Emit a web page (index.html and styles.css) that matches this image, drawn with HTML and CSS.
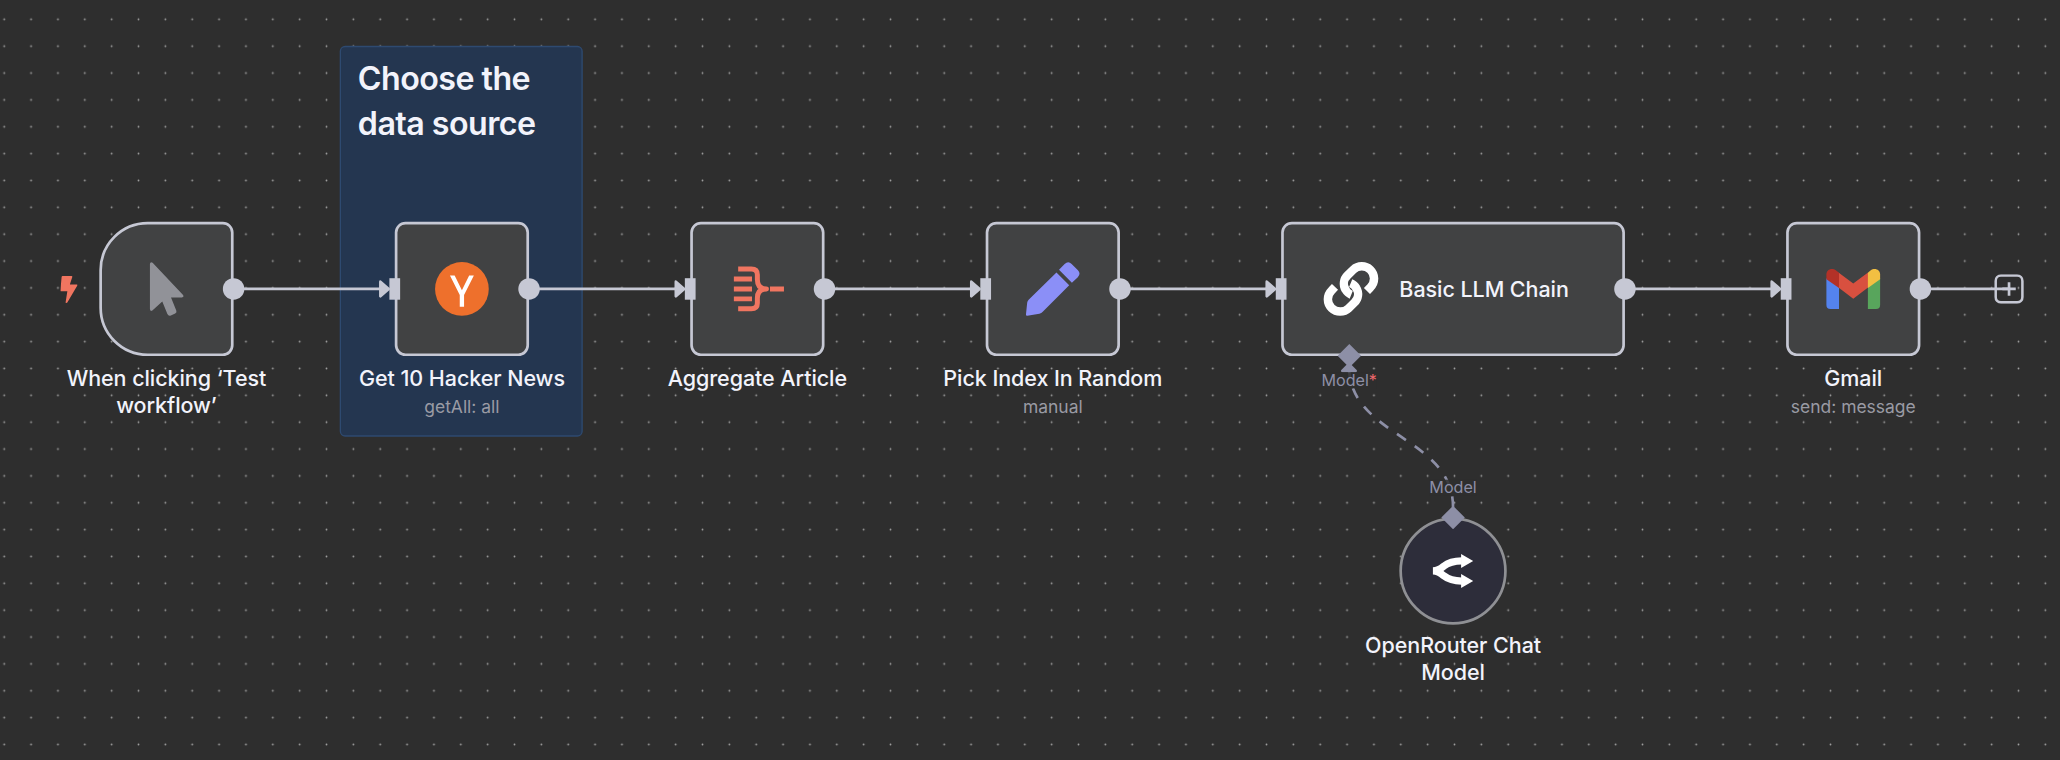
FILE: index.html
```html
<!DOCTYPE html>
<html lang="en">
<head>
<meta charset="utf-8">
<title>Workflow</title>
<link rel="stylesheet" href="styles.css">
</head>
<body>
<main class="canvas">
  <svg class="grid" width="2060" height="760">
    <defs>
      <pattern id="dots" x="-9.2" y="5.9" width="26.857" height="26.857" patternUnits="userSpaceOnUse">
        <circle cx="13.43" cy="13.43" r="0.9" fill="#a0a0a0"/>
      </pattern>
    </defs>
    <rect width="2060" height="760" fill="url(#dots)"/>
  </svg>

  <div class="viewport">
    <section class="sticky"><h2>Choose the data source</h2></section>

    <svg class="edges" width="1500" height="400">
      <defs>
        <path id="head" d="M-10.7 -5.4 L-4.5 0 L-10.7 5.4 Z"/>
      </defs>
      <g class="main">
        <path d="M100 50H210M320 50H430M540 50H650M760 50H870M1136 50H1246M1356 50H1422"/>
        <use href="#head" x="220" y="50"/>
        <use href="#head" x="440" y="50"/>
        <use href="#head" x="660" y="50"/>
        <use href="#head" x="880" y="50"/>
        <use href="#head" x="1256" y="50"/>
      </g>
      <path class="dashed" d="M1008 212.5 C1008 160 930.5 160 930.5 107.500"/>
      <path class="model-head" d="M930.5 106 L935.5 111 H925.5 Z"/>
    </svg>

    <article class="node trigger n1">
      <svg class="bolt" viewBox="0 0 18 28"><path d="M2.3 0H11.5Q12.6 0 12.3 1L9.8 8.6H17Q18 8.6 17.5 9.7L7.2 27.4Q6 28.4 5.4 27.2L7.2 15.7H.8Q0 15.7 0 14.8L1.3 1Q1.4 0 2.3 0Z"/></svg>
      <svg class="icon" viewBox="0 0 40 40"><path fill="#919298" d="M7.7 1.2V35Q7.8 37 9.500 36L16.900 29.400L20.700 38.600Q21.500 40.400 23.300 39.700L26.500 38.300Q28 37.600 27.300 36L23.400 26.300H31.500Q33.500 26 32.200 24.400L9.700 .5Q8.100 -.6 7.700 1.200Z"/></svg>
      <i class="out"></i>
      <div class="label"><b>When clicking ‘Test workflow’</b></div>
    </article>

    <article class="node n2">
      <i class="in"></i>
      <svg class="icon" viewBox="0 0 40 40"><circle cx="20" cy="20" r="20" fill="#ee702c"/><path fill="#fff" d="M11.100 9.900H14.600L20 20.900L25.400 9.900H28.900L21.600 24.500V33.300H18.400V24.500Z"/></svg>
      <i class="out"></i>
      <div class="label"><b>Get 10 Hacker News</b><small>getAll: all</small></div>
    </article>

    <article class="node n3">
      <i class="in"></i>
      <svg class="icon" viewBox="0 0 40 40"><g fill="none" stroke="#f07560" stroke-width="3.700"><path d="M5.700 5.200H15.500Q20 5.200 20 9.500V13Q20 20 26.800 20Q20 20 20 27V30.500Q20 34.800 15.500 34.800H5.700" stroke-linejoin="round"/><path d="M2.500 12.600H16M2.500 20H16M2.500 27.400H16M29.400 20H39.800"/></g></svg>
      <i class="out"></i>
      <div class="label"><b>Aggregate Article</b></div>
    </article>

    <article class="node n4">
      <i class="in"></i>
      <svg class="icon" viewBox="0 0 40 40"><g fill="#8b8ff7"><path d="M22.700 7.700L32.200 17.200L12.500 37Q11.500 38.100 10 38.500L1 40Q-.1 40.100 0 39L.9 30.200Q1 29 2 28Z"/><path d="M24.600 5.700L28.800 1.500Q31.400 -1.100 34 1.400L38.700 6.100Q41.100 8.600 38.600 11.200L34.200 15.400Z"/></g></svg>
      <i class="out"></i>
      <div class="label"><b>Pick Index In Random</b><small>manual</small></div>
    </article>

    <article class="node wide n5">
      <i class="in"></i>
      <svg class="icon" viewBox="0 0 40 40">
        <defs><path id="link" d="M20.200 24.300Q17.500 23.200 16 20.600A8.600 8.600 0 0 1 17.400 9.900L21.700 5.700A9.200 9.200 0 0 1 34.400 5.700A9.200 9.200 0 0 1 34.400 18.900L31.900 21.500"/></defs>
        <g fill="none" stroke="#fff" stroke-width="6.300"><use href="#link"/><use href="#link" transform="rotate(180 20 20)"/></g>
      </svg>
      <b class="title">Basic LLM Chain</b>
      <i class="out"></i>
      <i class="diamond"></i>
      <span class="port">Model<em>*</em></span>
    </article>

    <article class="node n6">
      <i class="in"></i>
      <svg class="icon" viewBox="0 0 40 40">
        <path fill="#5483ee" d="M0 12L9.400 18V35H3Q0 35 0 32Z"/>
        <path fill="#58a55c" d="M40 12L30.900 18V35H37Q40 35 40 32Z"/>
        <path fill="#d8503f" d="M9 7.800L20 16L31 7.800V19L20 27.300L9 19Z"/>
        <path fill="#b33127" d="M9.400 19.300L0 12.700V9.200C0 5.500 4 3.800 7.200 6.200L9.400 8Z"/>
        <path fill="#f2bf42" d="M30.900 19.300L40 12.700V9.200C40 5.500 36 3.800 32.800 6.200L30.900 8Z"/>
      </svg>
      <i class="out"></i>
      <svg class="plus" viewBox="0 0 22 22"><rect x="1" y="1" width="20" height="20" rx="4"/><path d="M11 6V16M6 11H16"/></svg>
      <div class="label"><b>Gmail</b><small>send: message</small></div>
    </article>

    <article class="node round n7">
      <span class="port">Model</span>
      <i class="diamond"></i>
      <svg class="icon" viewBox="0 0 30 30"><g fill="none" stroke="#fff" stroke-width="5.400"><path d="M0 15Q4 15 8 11.500Q13 7.500 21.500 7.500M0 15Q4 15 8 18.500Q13 22.500 21.500 22.500"/></g><path fill="#fff" d="M21 2.300L30 7.500L21 12.700ZM21 17.300L30 22.500L21 27.700Z"/></svg>
      <div class="label"><b>OpenRouter Chat Model</b></div>
    </article>
  </div>
</main>
</body>
</html>
```
FILE: styles.css
```css
* { box-sizing: border-box; }
body { margin: 0; background: #2e2e2e; font-family: Inter, "Liberation Sans", sans-serif; }
.canvas { position: relative; width: 2060px; height: 760px; overflow: hidden; }
.grid { position: absolute; inset: 0; }

/* Canvas zoom: everything inside uses workflow units */
.viewport {
  position: absolute; left: 0; top: 0; width: 1500px; height: 400px;
  transform: translate(99.300px, 221.800px) scale(1.343); transform-origin: 0 0;
}
.edges { position: absolute; left: 0; top: 0; overflow: visible; }
.main { stroke: #c6c8d4; stroke-width: 2; fill: #c6c8d4; stroke-linejoin: round; }
.dashed { fill: none; stroke: #8d8fa6; stroke-width: 2; stroke-dasharray: 8 8; }
.model-head { fill: #8d8fa6; stroke: #8d8fa6; stroke-width: 2; stroke-linejoin: round; }

.sticky {
  position: absolute; left: 179px; top: -131px; width: 181px; height: 291px;
  padding: 7px 12.500px; background: #243650; border: 1px solid #2e4a70; border-radius: 4px;
}
.sticky h2 { margin: 0; color: #f2f3fb; font-size: 24px; font-weight: 600; line-height: 33px; letter-spacing: -.42px; }

.node {
  position: absolute; top: 0; width: 100px; height: 100px;
  display: flex; align-items: center; justify-content: center;
  background: #414243; border: 2px solid #c6c8d4; border-radius: 8px;
}
.n1 { left: 0; }
.n2 { left: 220px; }
.n3 { left: 440px; }
.n4 { left: 660px; }
.n5 { left: 880px; }
.n6 { left: 1256px; }
.n7 { left: 968px; top: 220px; }
.trigger { border-radius: 36px 8px 8px 36px; }
.wide { width: 256px; justify-content: flex-start; gap: 16px; padding-left: 30px; }
.round { width: 80px; height: 80px; border-radius: 50%; background: #2d2d3a; border-color: #8f9094; }

.icon { width: 40px; height: 40px; display: block; overflow: visible; }
.round .icon { width: 30px; height: 30px; }
.title { color: #f2f3fb; font-size: 16px; font-weight: 450; letter-spacing: -.04px; line-height: 20px; padding-bottom: 1px; white-space: nowrap; }

.in, .out, .diamond { position: absolute; background: #c6c8d4; }
.in { left: -6px; top: 40px; width: 8px; height: 16px; }
.out { right: -10px; top: 40px; width: 16px; height: 16px; border-radius: 50%; }
.diamond { width: 17.500px; height: 17.500px; background: #8d8fa6; clip-path: polygon(50% 0, 100% 50%, 50% 100%, 0 50%); }
.wide .diamond { left: 40px; bottom: -10.500px; }
.round .diamond { left: 29.250px; top: -10.500px; }

.port {
  position: absolute; color: #8d8fa6; font-size: 12px; line-height: 12px; white-space: nowrap;
  background: rgba(46, 46, 46, .85);
}
.port em { color: #f0686c; font-style: normal; }
.wide .port { left: 28px; top: 110px; }
.round .port { left: 50%; top: -30.500px; transform: translateX(-50%); }

.label {
  position: absolute; top: 103.700px; left: 50%; width: 170px; transform: translateX(-50%);
  display: flex; flex-direction: column; align-items: center; gap: 3.700px;
  text-align: center; color: #f2f3fb; font-size: 16px; line-height: 20px;
}
.label b { font-weight: 450; letter-spacing: -.04px; }
.label small { color: #9a9ba4; font-size: 13px; line-height: 16px; }
.trigger .label { width: 156px; }
.round .label { top: 84.200px; width: 156px; line-height: 19.500px; }

.bolt { position: absolute; left: -31.500px; top: 37.500px; width: 13px; height: 21px; fill: #f07560; }
.plus { position: absolute; left: 153px; top: 37px; width: 22px; height: 22px; fill: none; stroke: #c6c8d4; stroke-width: 2; }
```
